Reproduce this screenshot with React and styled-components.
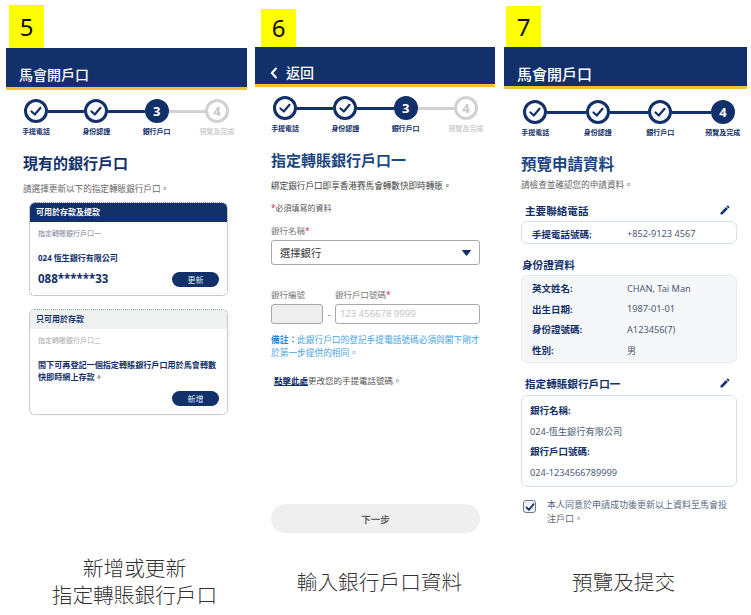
import styled, { createGlobalStyle } from "styled-components";
import { MdEdit } from "react-icons/md";

const NAVY = "#12306a";
const CJK = `"Noto Sans", "Noto Sans CJK TC", sans-serif`;

const GlobalStyle = createGlobalStyle`
  html, body {
    margin: 0;
    background: #fff;
  }
  body {
    font-family: ${CJK};
  }
  * {
    box-sizing: border-box;
  }
`;

const CheckMark = () => (
  <svg width="14" height="14" viewBox="0 0 14 14" fill="none">
    <polyline
      points="2.5,7.5 5.8,10.5 11.5,3.8"
      stroke={NAVY}
      strokeWidth="2.2"
      strokeLinecap="round"
      strokeLinejoin="round"
    />
  </svg>
);

const Stepper = ({ current, wide }) => {
  const labels = ["手提電話", "身份認證", "銀行戶口", "預覽及完成"];

  return (
    <StepperWrap>
      <StepTrack $wide={wide}>
        {labels.map((label, i) => {
          const n = i + 1;
          return (
            <StepSlot key={label} $first={i === 0}>
              {i > 0 && <StepLine $on={n <= current} />}
              {n < current && (
                <StepCircle>
                  <CheckMark />
                </StepCircle>
              )}
              {n === current && <StepCircle $active>{n}</StepCircle>}
              {n > current && <StepCircle $todo>{n}</StepCircle>}
            </StepSlot>
          );
        })}
      </StepTrack>
      <StepLabels $wide={wide}>
        {labels.map((label, i) => (
          <StepLabel key={label} $todo={i + 1 > current}>
            {label}
          </StepLabel>
        ))}
      </StepLabels>
    </StepperWrap>
  );
};

const App = () => (
  <Page>
    <GlobalStyle />

    <Panel $width={241} $left={6}>
      <BadgeRow $top={5} $left={3}>
        <Badge $height={43}>5</Badge>
      </BadgeRow>
      <Header $height={42} $left={13}>
        <HeaderTitle>馬會開戶口</HeaderTitle>
      </Header>
      <StepperArea $top={9}>
        <Stepper current={3} />
      </StepperArea>
      <Body $left={17}>
        <Heading>現有的銀行戶口</Heading>
        <Lead $top={10}>請選擇更新以下的指定轉賬銀行戶口。</Lead>

        <Card $top={7}>
          <CardHead>可用於存款及提款</CardHead>
          <CardBody>
            <CardLabel>指定轉賬銀行戶口一</CardLabel>
            <BankName>024 恆生銀行有限公司</BankName>
            <CardFoot $top={7}>
              <AccountNo>088******33</AccountNo>
              <PillButton>更新</PillButton>
            </CardFoot>
          </CardBody>
        </Card>

        <Card $top={13}>
          <CardHead $muted>只可用於存款</CardHead>
          <CardBody>
            <CardLabel $muted>指定轉賬銀行戶口二</CardLabel>
            <CardNote>
              閣下可再登記一個指定轉賬銀行戶口用於馬會轉數快即時網上存款。
            </CardNote>
            <CardFoot $top={8} $end>
              <PillButton>新增</PillButton>
            </CardFoot>
          </CardBody>
        </Card>
      </Body>
      <Caption $shiftLeft={16}>
        新增或更新
        <br />
        指定轉賬銀行戶口
      </Caption>
    </Panel>

    <Panel $width={240} $left={8}>
      <BadgeRow $top={9} $left={6}>
        <Badge $height={38}>6</Badge>
      </BadgeRow>
      <Header $height={40} $left={15}>
        <svg width="8" height="12" viewBox="0 0 8 12" fill="none">
          <polyline
            points="6,1.5 1.8,6 6,10.5"
            stroke="#fff"
            strokeWidth="2"
            strokeLinecap="round"
            strokeLinejoin="round"
          />
        </svg>
        <HeaderTitle $gap={8}>返回</HeaderTitle>
      </Header>
      <StepperArea $top={9}>
        <Stepper current={3} />
      </StepperArea>
      <Body $left={16}>
        <Heading $blue>指定轉賬銀行戶口一</Heading>
        <Lead $top={10} $dark>
          綁定銀行戶口即享香港賽馬會轉數快即時轉賬。
        </Lead>
        <Required>
          <Star>*</Star>必須填寫的資料
        </Required>
        <FieldLabel $top={12}>
          銀行名稱<Star>*</Star>
        </FieldLabel>
        <Select>
          選擇銀行
          <svg width="9" height="6" viewBox="0 0 9 6">
            <path d="M0.5 0.5 H8.5 L4.5 5.5 Z" fill={NAVY} stroke={NAVY} strokeLinejoin="round" />
          </svg>
        </Select>
        <AccountGrid>
          <FieldLabel>銀行編號</FieldLabel>
          <span />
          <FieldLabel>
            銀行戶口號碼<Star>*</Star>
          </FieldLabel>
          <CodeBox />
          <Dash>-</Dash>
          <NumberBox>123 456678 9999</NumberBox>
        </AccountGrid>
        <Remark>
          <b>{"備註\uFF1A"}</b>此銀行戶口的登記手提電話號碼必須與閣下剛才於第一步提供的相同。
        </Remark>
        <ChangePhone>
          <u>點擊此處</u>更改您的手提電話號碼。
        </ChangePhone>
        <NextButton>下一步</NextButton>
      </Body>
      <Caption $shiftLeft={9}>輸入銀行戶口資料</Caption>
    </Panel>

    <Panel $width={243} $left={9}>
      <BadgeRow $top={6} $left={2}>
        <Badge $height={41}>7</Badge>
      </BadgeRow>
      <Header $height={42} $left={13}>
        <HeaderTitle $large>馬會開戶口</HeaderTitle>
      </Header>
      <StepperArea $top={11}>
        <Stepper current={4} wide />
      </StepperArea>
      <Body $left={17}>
        <Heading $blue $large>
          預覽申請資料
        </Heading>
        <Lead $top={5}>請檢查並確認您的申請資料。</Lead>

        <SectionHead $inset={4} $top={12}>
          主要聯絡電話
          <MdEdit size={12} color={NAVY} />
        </SectionHead>
        <InfoBox $top={4} $tone="blue">
          <InfoRow $tight>
            <InfoKey>手提電話號碼:</InfoKey>
            <InfoValue>+852-9123 4567</InfoValue>
          </InfoRow>
        </InfoBox>

        <SectionHead $inset={1} $top={13}>
          身份證資料
        </SectionHead>
        <InfoBox $top={4} $tone="grey">
          <InfoRow>
            <InfoKey>英文姓名:</InfoKey>
            <InfoValue>CHAN, Tai Man</InfoValue>
          </InfoRow>
          <InfoRow>
            <InfoKey>出生日期:</InfoKey>
            <InfoValue>1987-01-01</InfoValue>
          </InfoRow>
          <InfoRow>
            <InfoKey>身份證號碼:</InfoKey>
            <InfoValue>A123456(7)</InfoValue>
          </InfoRow>
          <InfoRow>
            <InfoKey>性別:</InfoKey>
            <InfoValue>男</InfoValue>
          </InfoRow>
        </InfoBox>

        <SectionHead $inset={4} $top={13}>
          指定轉賬銀行戶口一
          <MdEdit size={12} color={NAVY} />
        </SectionHead>
        <InfoBox $top={5} $tone="blue" $stack>
          <StackKey>銀行名稱:</StackKey>
          <StackValue>024-恆生銀行有限公司</StackValue>
          <StackKey>銀行戶口號碼:</StackKey>
          <StackValue>024-1234566789999</StackValue>
        </InfoBox>

        <Agree>
          <AgreeBox>
            <svg width="10" height="10" viewBox="0 0 14 14" fill="none">
              <polyline
                points="2,7.5 5.5,11 12,3"
                stroke={NAVY}
                strokeWidth="2.4"
                strokeLinecap="round"
                strokeLinejoin="round"
              />
            </svg>
          </AgreeBox>
          <AgreeText>本人同意於申請成功後更新以上資料至馬會投注戶口。</AgreeText>
        </Agree>
      </Body>
      <Caption $shiftRight={4}>預覽及提交</Caption>
    </Panel>
  </Page>
);

const Page = styled.div`
  display: flex;
  width: 751px;
  height: 615px;
  overflow: hidden;
  background: #fff;
`;

const Panel = styled.section`
  display: flex;
  flex-direction: column;
  flex: none;
  width: ${(p) => p.$width}px;
  height: 615px;
  margin-left: ${(p) => p.$left}px;
`;

const BadgeRow = styled.div`
  display: flex;
  padding: ${(p) => p.$top}px 0 0 ${(p) => p.$left}px;
`;

const Badge = styled.div`
  display: flex;
  align-items: center;
  justify-content: center;
  width: 35px;
  height: ${(p) => p.$height}px;
  background: #ffff00;
  color: #111;
  font-size: 24px;
  line-height: 1;
`;

const Header = styled.header`
  display: flex;
  align-items: center;
  flex: none;
  height: ${(p) => p.$height}px;
  padding: 14px 0 0 ${(p) => p.$left}px;
  background: ${NAVY};
  border-bottom: 3px solid #f2c230;
`;

const HeaderTitle = styled.h1`
  margin: 0 0 0 ${(p) => p.$gap || 0}px;
  color: #fff;
  font-size: ${(p) => (p.$large ? 15 : 14)}px;
  font-weight: 500;
  line-height: 20px;
`;

const StepperArea = styled.div`
  padding-top: ${(p) => p.$top}px;
`;

const StepperWrap = styled.div`
  display: flex;
  flex-direction: column;
`;

const StepTrack = styled.div`
  display: flex;
  width: ${(p) => (p.$wide ? 212 : 205)}px;
  margin-left: ${(p) => (p.$wide ? 19 : 18)}px;
`;

const StepSlot = styled.div`
  display: flex;
  align-items: center;
  flex: ${(p) => (p.$first ? "none" : 1)};
`;

const StepLine = styled.div`
  flex: 1;
  height: 3px;
  background: ${(p) => (p.$on ? NAVY : "#d2d2d2")};
`;

const StepCircle = styled.div`
  display: flex;
  align-items: center;
  justify-content: center;
  flex: none;
  width: 24px;
  height: 24px;
  border: 3px solid ${(p) => (p.$todo ? "#d2d2d2" : NAVY)};
  border-radius: 50%;
  background: ${(p) => (p.$active ? NAVY : "#fff")};
  color: ${(p) => (p.$active ? "#fff" : p.$todo ? "#c8c8c8" : NAVY)};
  font-family: "Noto Sans", sans-serif;
  font-size: 13px;
  font-weight: 700;
`;

const StepLabels = styled.div`
  display: grid;
  grid-template-columns: repeat(4, 1fr);
  width: ${(p) => (p.$wide ? 250 : 241)}px;
  margin-top: 4px;
`;

const StepLabel = styled.div`
  color: ${(p) => (p.$todo ? "#cfcfcf" : NAVY)};
  font-size: 7px;
  font-weight: 700;
  line-height: 10px;
  text-align: center;
  white-space: nowrap;
`;

const Body = styled.main`
  display: flex;
  flex-direction: column;
  flex: 1;
  min-height: 0;
  padding: 16px 10px 0 ${(p) => p.$left}px;
`;

const Heading = styled.h2`
  margin: 0;
  color: ${(p) => (p.$blue ? "#1c4680" : NAVY)};
  font-size: ${(p) => (p.$large ? 15.5 : 15)}px;
  font-weight: 700;
  line-height: 20px;
`;

const Lead = styled.p`
  margin: ${(p) => p.$top}px 0 0;
  color: ${(p) => (p.$dark ? "#444" : "#666")};
  font-size: 8.6px;
  line-height: 12px;
`;

const Card = styled.div`
  width: 199px;
  margin: ${(p) => p.$top}px 0 0 6px;
  overflow: hidden;
  border: 1px dotted #8b93a3;
  border-radius: 6px;
`;

const CardHead = styled.div`
  height: 20px;
  margin: -1px -1px 0;
  padding-left: 7px;
  background: ${(p) => (p.$muted ? "#eff1f1" : NAVY)};
  color: ${(p) => (p.$muted ? NAVY : "#fff")};
  font-size: 8px;
  font-weight: 700;
  line-height: 20px;
`;

const CardBody = styled.div`
  padding: 7px 8px 8px;
`;

const CardLabel = styled.div`
  color: ${(p) => (p.$muted ? "#aaa" : "#7a8499")};
  font-size: 7px;
  line-height: 10px;
`;

const BankName = styled.div`
  margin-top: 13px;
  color: ${NAVY};
  font-size: 8px;
  font-weight: 700;
  line-height: 12px;
`;

const CardNote = styled.p`
  margin: 13px 0 0;
  color: ${NAVY};
  font-size: 8.1px;
  font-weight: 700;
  line-height: 12px;
`;

const CardFoot = styled.div`
  display: flex;
  align-items: center;
  justify-content: ${(p) => (p.$end ? "flex-end" : "space-between")};
  margin-top: ${(p) => p.$top}px;
`;

const AccountNo = styled.div`
  color: ${NAVY};
  font-size: 11.5px;
  font-weight: 700;
  line-height: 16px;
`;

const PillButton = styled.button`
  width: 47px;
  height: 15px;
  padding: 0;
  border: 0;
  border-radius: 8px;
  background: ${NAVY};
  color: #dfe5ef;
  font-family: inherit;
  font-size: 8px;
  line-height: 15px;
`;

const Star = styled.span`
  color: #d0324b;
`;

const Required = styled.div`
  margin-top: 11px;
  color: #555;
  font-size: 8px;
  line-height: 10px;
`;

const FieldLabel = styled.div`
  margin-top: ${(p) => p.$top || 0}px;
  color: #777;
  font-size: 8.5px;
  line-height: 12px;
`;

const Select = styled.div`
  display: flex;
  align-items: center;
  justify-content: space-between;
  flex: none;
  width: 209px;
  height: 25px;
  margin-top: 3px;
  padding: 0 8px;
  border: 1px solid #a9a9a9;
  border-radius: 3px;
  color: #333;
  font-size: 10.3px;
`;

const AccountGrid = styled.div`
  display: grid;
  grid-template-columns: 52px 12px 145px;
  grid-template-rows: 12px 20px;
  row-gap: 3px;
  margin-top: 24px;
`;

const CodeBox = styled.div`
  border: 1px solid #a9a9a9;
  border-radius: 3px;
  background: #eee;
`;

const Dash = styled.div`
  color: #777;
  font-size: 9px;
  line-height: 22px;
  text-align: center;
`;

const NumberBox = styled.div`
  padding-left: 4px;
  border: 1px solid #a9a9a9;
  border-radius: 3px;
  color: #c4c4c4;
  font-size: 9.5px;
  line-height: 18px;
`;

const Remark = styled.p`
  width: 209px;
  margin: 10px 0 0;
  color: #45a5e5;
  font-size: 8.7px;
  line-height: 13px;

  b {
    color: #2288d8;
  }
`;

const ChangePhone = styled.p`
  margin: 15px 0 0 3px;
  color: #555;
  font-size: 8.5px;
  line-height: 12px;

  u {
    color: ${NAVY};
    font-weight: 700;
  }
`;

const NextButton = styled.button`
  flex: none;
  width: 209px;
  height: 29px;
  margin: auto 0 18px;
  padding: 0;
  border: 0;
  border-radius: 15px;
  background: #efefef;
  color: #666;
  font-family: inherit;
  font-size: 9.5px;
  font-weight: 700;
`;

const SectionHead = styled.h3`
  display: flex;
  align-items: center;
  justify-content: space-between;
  height: 14px;
  margin: ${(p) => p.$top}px 0 0;
  padding: 0 6px 0 ${(p) => p.$inset}px;
  color: ${NAVY};
  font-size: 10.6px;
  font-weight: 700;
`;

const InfoBox = styled.div`
  flex: none;
  width: 216px;
  margin-top: ${(p) => p.$top}px;
  padding: ${(p) => (p.$stack ? "5px 8px 3px" : "2px 10px")};
  border: 1px solid ${(p) => (p.$tone === "blue" ? "#d7e1ec" : "#e8eaed")};
  border-radius: 6px;
  background: ${(p) => (p.$tone === "grey" ? "#f6f7f8" : "#fff")};
`;

const InfoRow = styled.div`
  display: grid;
  grid-template-columns: 95px 1fr;
  align-items: center;
  height: ${(p) => (p.$tight ? 17 : 20.5)}px;
  padding-top: ${(p) => (p.$tight ? 2 : 0)}px;
`;

const InfoKey = styled.div`
  color: ${NAVY};
  font-size: 9.5px;
  font-weight: 700;
`;

const InfoValue = styled.div`
  color: #4c5a72;
  font-size: 9.2px;
`;

const StackKey = styled(InfoKey)`
  line-height: 20.5px;
`;

const StackValue = styled(InfoValue)`
  line-height: 20.5px;
`;

const Agree = styled.div`
  display: flex;
  gap: 11px;
  margin-top: 11px;
  padding-left: 2px;
`;

const AgreeBox = styled.div`
  display: flex;
  align-items: center;
  justify-content: center;
  flex: none;
  width: 13px;
  height: 13px;
  margin-top: 2px;
  border: 1px solid #6d7c96;
  border-radius: 3px;
  background: #f1f4f8;
`;

const AgreeText = styled.p`
  width: 182px;
  margin: 0;
  color: #5a6a84;
  font-size: 9px;
  line-height: 14px;
`;

const Caption = styled.div`
  display: flex;
  align-items: center;
  justify-content: center;
  flex: none;
  height: 60px;
  margin-bottom: 4px;
  padding: 0 ${(p) => p.$shiftRight || 0}px 0 ${(p) => p.$shiftLeft || 0}px;
  color: #333;
  font-family: "Noto Sans CJK TC", sans-serif;
  font-size: 20.7px;
  font-weight: 300;
  line-height: 27px;
  text-align: center;
`;

export default App;
